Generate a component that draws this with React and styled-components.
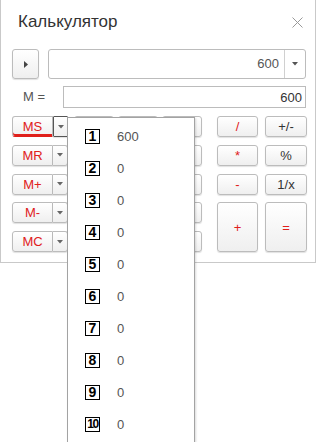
import React from "react";
import styled, { createGlobalStyle, css } from "styled-components";

const GlobalStyle = createGlobalStyle`
  html, body {
    margin: 0;
    padding: 0;
    background: #fff;
    overflow: hidden;
  }
  body {
    font-family: "Liberation Sans", Arial, sans-serif;
  }
`;

const red = "#e0201b";

const Page = styled.div`
  position: relative;
  width: 318px;
  height: 442px;
  overflow: hidden;
`;

const Window = styled.div`
  border: 1px solid #c9c9c9;
  border-top: none;
  background: #fff;
  padding: 11px 9px 10px 11px;
  box-sizing: content-box;
  width: 294px;
`;

const Header = styled.div`
  display: flex;
  align-items: center;
  justify-content: space-between;
  height: 22px;
  padding-left: 6px;
`;

const Title = styled.h1`
  margin: 0;
  font-size: 17px;
  line-height: 22px;
  font-weight: normal;
  color: #333;
`;

const Close = styled.button`
  border: none;
  background: none;
  padding: 0;
  width: 12px;
  height: 12px;
  margin-right: 3px;
  display: flex;
  align-items: center;
  justify-content: center;
`;

const Row = styled.div`
  display: flex;
  align-items: stretch;
  height: ${(p) => p.$h}px;
  margin-top: ${(p) => p.$mt}px;
`;

const buttonBase = css`
  box-sizing: border-box;
  border: 1px solid #bcbcbc;
  border-radius: 3px;
  background: linear-gradient(#ffffff, #efefef);
  box-shadow: 0 1px 1px rgba(0, 0, 0, 0.12);
  font-family: "Liberation Sans", Arial, sans-serif;
  padding: 0;
  display: flex;
  align-items: center;
  justify-content: center;
`;

const PlayButton = styled.button`
  ${buttonBase};
  width: 27px;
  margin-right: 9px;
`;

const Combo = styled.div`
  flex: 1;
  display: flex;
  border: 1px solid #bcbcbc;
  border-radius: 3px;
  background: #fff;
`;

const ComboValue = styled.div`
  flex: 1;
  text-align: right;
  font-size: 13px;
  line-height: 28px;
  color: #555;
  padding-right: 5px;
  border-right: 1px solid #d0d0d0;
`;

const ComboArrow = styled.div`
  width: 20px;
  display: flex;
  align-items: center;
  justify-content: center;
`;

const Label = styled.div`
  width: 40px;
  padding-left: 11px;
  font-size: 13px;
  line-height: 22px;
  color: #555;
`;

const Field = styled.div`
  flex: 1;
  border: 1px solid #bcbcbc;
  text-align: right;
  font-size: 13px;
  line-height: 21px;
  color: #333;
  padding-right: 3px;
`;

const Keypad = styled.div`
  display: flex;
  margin-top: 8px;
`;

const Column = styled.div`
  display: grid;
  grid-template-columns: ${(p) => p.$cols};
  grid-auto-rows: 21px;
  row-gap: 7.75px;
  column-gap: ${(p) => p.$gap || 0}px;
  margin-left: ${(p) => p.$ml || 0}px;
`;

const MemGroup = styled.div`
  display: flex;
`;

const MemButton = styled.button`
  ${buttonBase};
  width: 41px;
  font-size: 13px;
  color: ${red};
  border-radius: 3px 0 0 3px;
  ${(p) =>
    p.$active &&
    css`
      box-shadow: inset 0 -2px 0 ${red};
      border-bottom-color: ${red};
    `}
`;

const MemArrow = styled.button`
  ${buttonBase};
  width: 15px;
  border-left: none;
  border-radius: 0 3px 3px 0;
  ${(p) =>
    p.$focus &&
    css`
      border: 1px solid #555;
      border-radius: 1px;
    `}
`;

const KeyButton = styled.button`
  ${buttonBase};
  font-size: 13px;
  color: ${(p) => (p.$red ? red : "#333")};
  grid-row: ${(p) => (p.$tall ? "span 2" : "auto")};
`;

const Popup = styled.div`
  position: absolute;
  left: 67px;
  top: 117px;
  width: 126px;
  height: 360px;
  border: 1px solid #a3a3a3;
  background: #fff;
  box-shadow: 1px 1px 2px rgba(0, 0, 0, 0.15);
  padding-top: 2px;
`;

const Item = styled.div`
  display: flex;
  align-items: center;
  height: 32px;
  padding-left: 17px;
`;

const Slot = styled.span`
  box-sizing: border-box;
  width: 15px;
  height: 15px;
  border: 1px solid #000;
  display: flex;
  align-items: center;
  justify-content: center;
  font-family: "Liberation Sans", Arial, sans-serif;
  font-weight: bold;
  font-size: ${(p) => (p.$wide ? 12 : 14)}px;
  letter-spacing: ${(p) => (p.$wide ? -1.5 : 0)}px;
  line-height: 1;
  color: #000;
  margin-right: 17px;
  overflow: hidden;
`;

const ItemValue = styled.span`
  font-size: 13px;
  color: #555;
`;

const Triangle = ({ dir = "down", color = "#555" }) =>
  dir === "down" ? (
    <svg width="6" height="4" viewBox="0 0 6 4">
      <path d="M0 0 L6 0 L3 3.5 Z" fill={color} />
    </svg>
  ) : (
    <svg width="4" height="7" viewBox="0 0 4 7">
      <path d="M0 0 L4 3.5 L0 7 Z" fill={color} />
    </svg>
  );

const memory = ["MS", "MR", "M+", "M-", "MC"];
// digit keys lie under the open memory list, so only their edges show
const hiddenKeys = Array.from({ length: 15 }, (_, i) => i);
const slots = ["600", "0", "0", "0", "0", "0", "0", "0", "0", "0"];

export default function App() {
  return (
    <Page>
      <GlobalStyle />
      <Window>
        <Header>
          <Title>Калькулятор</Title>
          <Close aria-label="close">
            <svg width="11" height="11" viewBox="0 0 11 11">
              <path d="M0.5 0.5 L10.5 10.5 M10.5 0.5 L0.5 10.5" stroke="#999" strokeWidth="1" />
            </svg>
          </Close>
        </Header>
        <Row $h={30} $mt={16}>
          <PlayButton>
            <Triangle dir="right" color="#444" />
          </PlayButton>
          <Combo>
            <ComboValue>600</ComboValue>
            <ComboArrow>
              <Triangle />
            </ComboArrow>
          </Combo>
        </Row>
        <Row $h={22} $mt={7}>
          <Label>M =</Label>
          <Field>600</Field>
        </Row>
        <Keypad>
          <Column $cols="56px">
            {memory.map((m, i) => (
              <MemGroup key={m}>
                <MemButton $active={i === 0}>{m}</MemButton>
                <MemArrow $focus={i === 0}>
                  <Triangle color="#666" />
                </MemArrow>
              </MemGroup>
            ))}
          </Column>
          <Column $cols="40px 40px 40px" $gap={4} $ml={6}>
            {hiddenKeys.map((k) => (
              <KeyButton key={k} aria-hidden="true" />
            ))}
          </Column>
          <Column $cols="41px 42px" $gap={7} $ml={15}>
            <KeyButton $red>/</KeyButton>
            <KeyButton>+/-</KeyButton>
            <KeyButton $red>*</KeyButton>
            <KeyButton>%</KeyButton>
            <KeyButton $red>-</KeyButton>
            <KeyButton>1/x</KeyButton>
            <KeyButton $red $tall>+</KeyButton>
            <KeyButton $red $tall>=</KeyButton>
          </Column>
        </Keypad>
      </Window>
      <Popup>
        {slots.map((v, i) => (
          <Item key={i}>
            <Slot $wide={i === 9}>{i + 1}</Slot>
            <ItemValue>{v}</ItemValue>
          </Item>
        ))}
      </Popup>
    </Page>
  );
}
